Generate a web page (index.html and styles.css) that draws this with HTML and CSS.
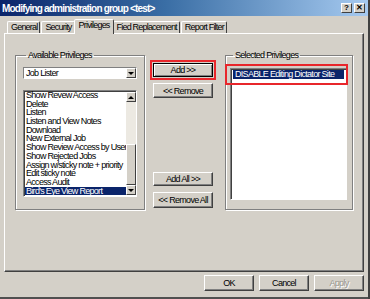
FILE: index.html
```html
<!DOCTYPE html>
<html lang="en">
  <head>
    <meta charset="UTF-8" />
    <title>Modifying administration group</title>
    <link rel="stylesheet" href="styles.css">
  </head>
  <body>
    <div class="window">
      <div class="titlebar">
        <span class="title">Modifying administration group &lt;test&gt;</span>
        <span class="caption-btns">
          <span class="caption-btn">?</span>
          <span class="caption-btn">&#x2715;</span>
        </span>
      </div>

      <div class="tabs">
        <span class="tab">General</span>
        <span class="tab">Security</span>
        <span class="tab active">Privileges</span>
        <span class="tab">Fied Replacement</span>
        <span class="tab">Report Filter</span>
      </div>

      <div class="panel">
        <fieldset class="group available">
          <legend>Available Privileges</legend>
          <div class="combo">
            <span class="combo-text">Job Lister</span>
            <span class="arrow-btn"><span class="tri down"></span></span>
          </div>
          <div class="list with-scroll">
            <ul class="items">
              <li>Show Revew Access</li>
              <li>Delete</li>
              <li>Listen</li>
              <li>Listen and View Notes</li>
              <li>Download</li>
              <li>New External Job</li>
              <li>Show Review Access by User a</li>
              <li>Show Rejected Jobs</li>
              <li>Assign w/sticky note + priority</li>
              <li>Edit sticky note</li>
              <li>Access Audit</li>
              <li class="sel">Bird's Eye View Report</li>
            </ul>
            <div class="scrollbar">
              <span class="arrow-btn"><span class="tri up"></span></span>
              <span class="track"></span>
              <span class="thumb"></span>
              <span class="arrow-btn"><span class="tri down"></span></span>
            </div>
          </div>
        </fieldset>

        <div class="mid">
          <button class="btn default add">Add &gt;&gt;</button>
          <button class="btn remove">&lt;&lt; Remove</button>
          <button class="btn add-all">Add All &gt;&gt;</button>
          <button class="btn remove-all">&lt;&lt; Remove All</button>
        </div>

        <fieldset class="group selected">
          <legend>Selected Privileges</legend>
          <div class="list">
            <ul class="items">
              <li class="sel">DISABLE Editing Dictator Site</li>
            </ul>
          </div>
          <span class="mark"></span>
        </fieldset>
      </div>

      <div class="footer">
        <button class="btn wide">OK</button>
        <button class="btn wide">Cancel</button>
        <button class="btn wide" disabled>Apply</button>
      </div>
    </div>
  </body>
</html>
```

FILE: styles.css
```css
* {
  box-sizing: border-box;
}

body {
  margin: 0;
  background: #d4d0c8;
  font-family: "Liberation Sans", Arial, sans-serif;
  font-size: 9px;
  letter-spacing: -0.7px;
  color: #000;
}

.window {
  width: 370px;
  height: 299px;
  background: #d4d0c8;
  border-right: 2px solid #404040;
  display: flex;
  flex-direction: column;
  position: relative;
}

.window::after {
  content: '';
  position: absolute;
  left: 0;
  right: 0;
  top: 297px;
  height: 2px;
  background: #505050;
}

.titlebar {
  height: 16px;
  background: linear-gradient(to right, #0a246a 0%, #3a6ea5 45%, #a6caf0 100%);
  display: flex;
  align-items: center;
  justify-content: space-between;
  padding: 0 2px 0 2px;
}

.title {
  color: #fff;
  font-weight: bold;
  font-size: 10px;
  letter-spacing: -0.8px;
}

.caption-btns {
  display: flex;
  gap: 2px;
  margin-right: 1px;
}

.caption-btn {
  width: 11px;
  height: 10px;
  background: #d4d0c8;
  border: 1px solid;
  border-color: #fff #404040 #404040 #fff;
  font-size: 8px;
  font-weight: bold;
  letter-spacing: 0;
  line-height: 8px;
  text-align: center;
}

.tabs {
  display: flex;
  align-items: flex-end;
  margin: 4px 0 0 7px;
  height: 13px;
  position: relative;
  z-index: 1;
  letter-spacing: -0.8px;
}

.tab {
  height: 12px;
  padding: 0 2px 0 3px;
  border: 1px solid;
  border-bottom: none;
  border-color: #fff #404040 transparent #fff;
  border-radius: 2px 2px 0 0;
  line-height: 11px;
  margin-right: 1px;
}

.tab.active {
  height: 15px;
  margin: 0 -1px 0 -2px;
  padding: 0 3px 0 4px;
  background: #d4d0c8;
  position: relative;
  top: 1px;
}

.panel {
  width: 360px;
  height: 239px;
  margin-left: 4px;
  border: 1px solid;
  border-color: #fff #404040 #404040 #fff;
  box-shadow: inset -1px -1px 0 #808080;
  display: flex;
  align-items: flex-start;
  padding: 16px 10px 0 10px;
}

.group {
  margin: 0;
  padding: 0;
  height: 160px;
  border: 1px solid #808080;
  box-shadow: 1px 1px 0 #fff, inset 1px 1px 0 #fff;
  position: relative;
}

.group legend {
  padding: 0 2px;
  margin-left: 3px;
  line-height: 10px;
}

.available {
  width: 130px;
  padding-left: 7px;
}

.selected {
  width: 128px;
  margin-left: 12px;
  padding-left: 4px;
}

.combo {
  width: 114px;
  height: 12px;
  margin-top: 7px;
  background: #fff;
  border: 1px solid;
  border-color: #808080 #fff #fff #808080;
  display: flex;
  align-items: center;
}

.combo-text {
  flex: 1;
  padding-left: 2px;
}

.arrow-btn {
  width: 10px;
  height: 10px;
  background: #d4d0c8;
  border: 1px solid;
  border-color: #fff #404040 #404040 #fff;
  display: flex;
  align-items: center;
  justify-content: center;
}

.tri {
  width: 0;
  height: 0;
  border-left: 3px solid transparent;
  border-right: 3px solid transparent;
}

.tri.down {
  border-top: 3px solid #000;
}

.tri.up {
  border-bottom: 3px solid #000;
}

.list {
  background: #fff;
  border: 1px solid;
  border-color: #808080 #fff #fff #808080;
  box-shadow: inset 1px 1px 0 #404040;
  display: flex;
}

.available .list {
  width: 114px;
  height: 107px;
  margin-top: 11px;
  padding: 1px 0 1px 1px;
}

.selected .list {
  width: 117px;
  height: 132px;
  margin-top: 8px;
  padding: 1px 2px 0 2px;
}

.items {
  list-style: none;
  margin: 0;
  padding: 0;
  flex: 1;
  overflow: hidden;
  min-width: 0;
}

.items li {
  height: 8.7px;
  line-height: 8.7px;
  padding-left: 1px;
  white-space: nowrap;
}

.available .items {
  margin-top: -1px;
}

.items li.sel {
  background: #0a246a;
  color: #fff;
}

.selected .items li.sel {
  height: 9px;
  line-height: 9px;
  padding-left: 2px;
}

.scrollbar {
  width: 10px;
  display: flex;
  flex-direction: column;
}

.scrollbar .track {
  height: 42px;
  background: #ece9e2;
}

.scrollbar .thumb {
  flex: 1;
  background: #d4d0c8;
  border: 1px solid;
  border-color: #fff #404040 #404040 #fff;
}

.mark {
  position: absolute;
  left: -1px;
  top: 4px;
  width: 123px;
  height: 21px;
  border: 2px solid #e8262b;
}

.mid {
  width: 60px;
  margin-left: 8px;
  display: flex;
  flex-direction: column;
}

.btn {
  font: inherit;
  letter-spacing: inherit;
  white-space: nowrap;
  color: #000;
  background: #d4d0c8;
  border: 1px solid;
  border-color: #fff #404040 #404040 #fff;
  box-shadow: inset -1px -1px 0 #808080;
  padding: 0;
  height: 15px;
  line-height: 12px;
}

.btn.default {
  border-color: #000;
  box-shadow: inset 1px 1px 0 #fff, inset -1px -1px 0 #808080;
  outline: 2px solid #e8262b;
  outline-offset: 1px;
}

.add {
  margin-top: 13px;
  height: 14px;
}

.remove {
  margin-top: 6px;
}

.add-all {
  margin-top: 74px;
  height: 14px;
}

.remove-all {
  margin-top: 6px;
  height: 16px;
}

.footer {
  display: flex;
  justify-content: flex-end;
  gap: 5px;
  margin: 3px 4px 0 0;
}

.btn.wide {
  width: 50px;
  height: 16px;
}

.btn:disabled {
  color: #9a978f;
  text-shadow: 1px 1px 0 #fff;
}
```
